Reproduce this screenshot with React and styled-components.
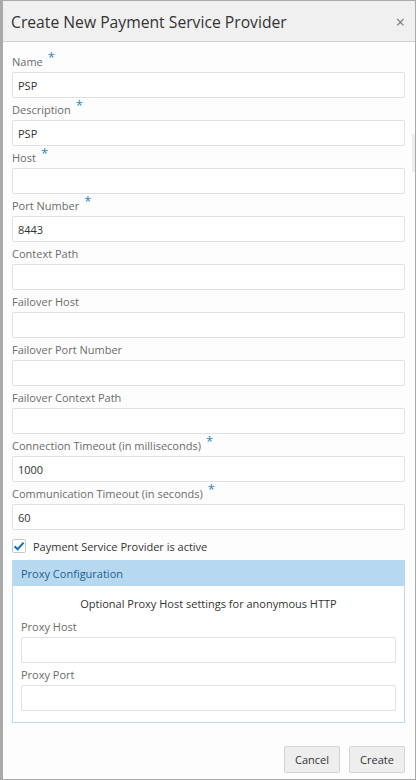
import React from 'react'
import styled, { createGlobalStyle } from 'styled-components'

const GlobalStyle = createGlobalStyle`
  html, body {
    margin: 0;
    padding: 0;
    background: #ffffff;
  }
  * { box-sizing: border-box; }
`

const Dialog = styled.div`
  width: 416px;
  height: 780px;
  border: 1px solid #a9a9a9;
  border-left: 3px solid #a9a9a9;
  background: #fdfdfd;
  font-family: 'Open Sans', 'Noto Sans', sans-serif;
  display: flex;
  flex-flow: column;
  position: relative;
`

const Header = styled.div`
  height: 41px;
  flex: 0 0 41px;
  background: #f0f0f0;
  border-bottom: 1px solid #cfcfcf;
  display: flex;
  align-items: center;
  justify-content: space-between;
  padding: 1px 10px 0 8px;
`

const Title = styled.h1`
  margin: 0;
  font-size: 15.7px;
  font-weight: 400;
  color: #333;
`

const Close = styled.span`
  font-size: 16px;
  color: #777;
  line-height: 1;
`

const Body = styled.div`
  padding: 8px 10px 0 9px;
  display: flex;
  flex-flow: column;
`

const Field = styled.div`
  display: flex;
  flex-flow: column;
`

const Label = styled.label`
  height: 22px;
  display: flex;
  align-items: center;
  font-size: 11px;
  color: #6b6b6b;
`

const Star = styled.span`
  color: #2b86c7;
  font-size: 13px;
  margin-left: 5px;
  position: relative;
  top: -4px;
`

const Input = styled.div`
  height: 26px;
  border: 1px solid #e1e1e1;
  border-radius: 2px;
  background: #fff;
  font-size: 11px;
  color: #333;
  padding: 0 5px;
  display: flex;
  align-items: center;
`

const CheckRow = styled.div`
  display: flex;
  align-items: center;
  height: 20px;
  margin: 6px 0 4px;
  font-size: 11px;
  color: #333;
  gap: 7px;
`

const Box = styled.span`
  width: 14px;
  height: 14px;
  border: 1px solid #c8c8c8;
  border-radius: 2px;
  background: #fff;
  display: flex;
  align-items: center;
  justify-content: center;
`

const Panel = styled.div`
  border: 1px solid #b8dbf0;
  display: flex;
  flex-flow: column;
`

const PanelHead = styled.div`
  height: 25px;
  background: #b6d9f0;
  color: #1f5e91;
  font-size: 11px;
  display: flex;
  align-items: center;
  padding-left: 8px;
`

const PanelBody = styled.div`
  padding: 5px 8px 11px 8px;
  display: flex;
  flex-flow: column;
  background: #fff;
`

const Note = styled.div`
  text-align: center;
  font-size: 11px;
  color: #333;
  height: 24px;
  display: flex;
  align-items: center;
  justify-content: center;
`

const Footer = styled.div`
  margin-top: auto;
  display: flex;
  justify-content: flex-end;
  gap: 9px;
  padding: 0 10px 6px 0;
`

const Button = styled.button`
  height: 27px;
  width: 56px;
  border: 1px solid #d4d4d4;
  border-radius: 2px;
  background: #eeeeee;
  font-family: inherit;
  font-size: 11px;
  color: #333;
  padding: 0;
`

const Scroll = styled.div`
  position: absolute;
  right: 0;
  top: 133px;
  width: 3px;
  height: 38px;
  background: #ececec;
`

const fields = [
  { label: 'Name', req: true, value: 'PSP' },
  { label: 'Description', req: true, value: 'PSP' },
  { label: 'Host', req: true, value: '' },
  { label: 'Port Number', req: true, value: '8443' },
  { label: 'Context Path', value: '' },
  { label: 'Failover Host', value: '' },
  { label: 'Failover Port Number', value: '' },
  { label: 'Failover Context Path', value: '' },
  { label: 'Connection Timeout (in milliseconds)', req: true, value: '1000' },
  { label: 'Communication Timeout (in seconds)', req: true, value: '60' },
]

const App = () => {
  return (
    <>
      <GlobalStyle />
      <Dialog>
        <Header>
          <Title>Create New Payment Service Provider</Title>
          <Close>×</Close>
        </Header>
        <Body>
          {fields.map(f => (
            <Field key={f.label}>
              <Label>
                {f.label}
                {f.req && <Star>*</Star>}
              </Label>
              <Input>{f.value}</Input>
            </Field>
          ))}
          <CheckRow>
            <Box>
              <svg width="12" height="12" viewBox="0 0 12 12">
                <path d="M1.5 6.2 L4.6 9.2 L10.6 2.6" fill="none" stroke="#0a72c7" strokeWidth="2" />
              </svg>
            </Box>
            Payment Service Provider is active
          </CheckRow>
          <Panel>
            <PanelHead>Proxy Configuration</PanelHead>
            <PanelBody>
              <Note>Optional Proxy Host settings for anonymous HTTP</Note>
              <Field>
                <Label>Proxy Host</Label>
                <Input />
              </Field>
              <Field>
                <Label>Proxy Port</Label>
                <Input />
              </Field>
            </PanelBody>
          </Panel>
        </Body>
        <Footer>
          <Button>Cancel</Button>
          <Button>Create</Button>
        </Footer>
        <Scroll />
      </Dialog>
    </>
  )
}

export default App
